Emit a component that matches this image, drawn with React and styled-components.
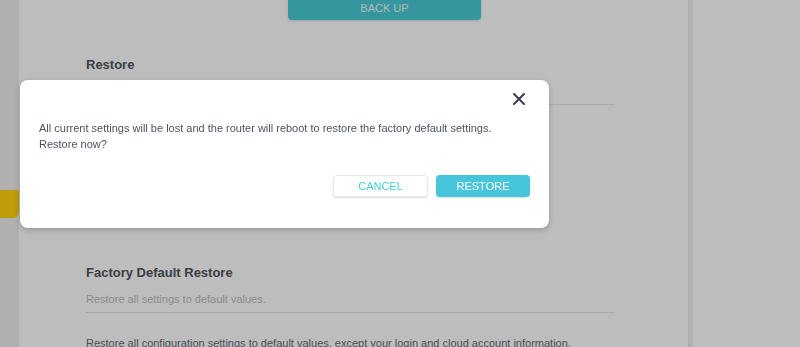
import React from "react"
import styled, { createGlobalStyle } from "styled-components"

const GlobalStyle = createGlobalStyle`
    html, body {
        margin: 0;
        padding: 0;
        height: 347px;
        overflow: hidden;
        background: #ffffff;
        font-family: "Liberation Sans", Arial, sans-serif;
    }
`

const Page = styled.div`
    display: flex;
    width: 800px;
    height: 347px;
    overflow: hidden;
    background: #ffffff;
`
const SideStrip = styled.div`
    width: 19px;
    flex-shrink: 0;
    background: #eeeeee;
`
const SideTab = styled.div`
    margin-top: 190px;
    width: 19px;
    height: 28px;
    background: #ffd10e;
    border-bottom-right-radius: 6px;
`
const Main = styled.div`
    width: 669px;
    flex-shrink: 0;
    background: #ffffff;
`
const Content = styled.div`
    width: 529px;
    margin-left: 67px;
`
const Edge = styled.div`
    width: 5px;
    flex-shrink: 0;
    background: linear-gradient(to right, #eaeaea, #f3f3f3);
`
const Aside = styled.div`
    flex: 1;
    background: #ffffff;
`
const Button = styled.button`
    display: block;
    height: 24px;
    width: 193px;
    margin-left: 202px;
    margin-top: ${p => p.$top || 0}px;
    border: none;
    border-radius: 4px;
    background: #4acbd6;
    color: #eaf8fa;
    font-family: "Liberation Sans", Arial, sans-serif;
    font-size: 11px;
    box-shadow: 0 1px 3px rgba(0, 0, 0, 0.15);
`
const Title = styled.div`
    margin-top: ${p => p.$top}px;
    font-size: 13px;
    line-height: 16px;
    font-weight: bold;
    color: #4f555c;
`
const Desc = styled.div`
    margin-top: 10px;
    padding-bottom: 5px;
    font-size: 11px;
    line-height: 16px;
    color: #bcbcbc;
    border-bottom: 1px solid #e4e4e4;
`
const FileRow = styled.div`
    display: flex;
    align-items: center;
    margin-top: 30px;
    height: 32px;
`
const FileInput = styled.div`
    width: 260px;
    height: 30px;
    margin-left: 40px;
    border: 1px solid #dddddd;
    border-radius: 4px;
`
const Text = styled.div`
    margin-top: 22px;
    font-size: 11px;
    line-height: 16px;
    color: #646a70;
`
const Overlay = styled.div`
    position: fixed;
    inset: 0;
    background: rgba(0, 0, 0, 0.26);
`
const Dialog = styled.div`
    position: fixed;
    left: 20px;
    top: 80px;
    width: 529px;
    height: 148px;
    box-sizing: border-box;
    padding: 40px 19px 0 19px;
    background: #ffffff;
    border-radius: 8px;
    box-shadow: 0 2px 6px rgba(0, 0, 0, 0.22);
`
const Close = styled.button`
    position: absolute;
    right: 18px;
    top: 7px;
    width: 24px;
    height: 24px;
    padding: 0;
    border: none;
    background: transparent;
    display: flex;
    align-items: center;
    justify-content: center;
`
const Message = styled.p`
    margin: 0;
    font-size: 11px;
    line-height: 16px;
    color: #4e545b;
`
const Actions = styled.div`
    display: flex;
    justify-content: flex-end;
    gap: 8px;
    margin-top: 23px;
`
const DialogButton = styled.button`
    width: ${p => p.$w}px;
    height: 22px;
    border-radius: 4px;
    font-family: "Liberation Sans", Arial, sans-serif;
    font-size: 11px;
    border: ${p => (p.$primary ? "none" : "1px solid #ececec")};
    background: ${p => (p.$primary ? "#47c6db" : "#ffffff")};
    color: ${p => (p.$primary ? "#ffffff" : "#4acbd6")};
    box-shadow: 0 1px 2px rgba(0, 0, 0, 0.15);
`

const App = () => {
    return (
        <>
            <GlobalStyle />
            <Page>
                <SideStrip>
                    <SideTab />
                </SideStrip>
                <Main>
                    <Content>
                        <Button $top={-4}>BACK UP</Button>
                        <Title $top={37}>Restore</Title>
                        <Desc>Restore saved settings from a file.</Desc>
                        <FileRow>
                            <FileInput />
                        </FileRow>
                        <Button $top={30}>RESTORE</Button>
                        <Title $top={44}>Factory Default Restore</Title>
                        <Desc>Restore all settings to default values.</Desc>
                        <Text>Restore all configuration settings to default values, except your login and cloud account information.</Text>
                    </Content>
                </Main>
                <Edge />
                <Aside />
            </Page>
            <Overlay />
            <Dialog>
                <Close aria-label="close">
                    <svg width="12" height="12" viewBox="0 0 12 12">
                        <path d="M1 1 L11 11 M11 1 L1 11" stroke="#3a4047" strokeWidth="2" strokeLinecap="round" />
                    </svg>
                </Close>
                <Message>
                    All current settings will be lost and the router will reboot to restore the factory default settings.
                    <br />
                    Restore now?
                </Message>
                <Actions>
                    <DialogButton $w={95}>CANCEL</DialogButton>
                    <DialogButton $w={94} $primary>RESTORE</DialogButton>
                </Actions>
            </Dialog>
        </>
    )
}

export default App
